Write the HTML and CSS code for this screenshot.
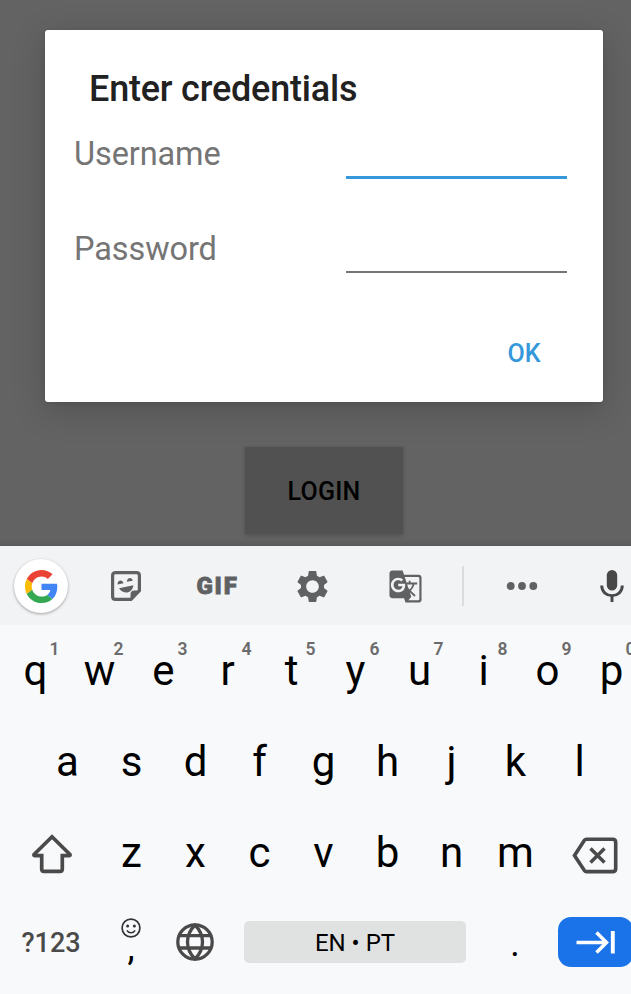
FILE: index.html
```html
<!DOCTYPE html>
<html lang="en">
<head>
<meta charset="utf-8">
<title>Enter credentials</title>
<link rel="stylesheet" href="styles.css">
</head>
<body>
<main class="screen">
  <section class="dialog">
    <h1 class="title">Enter credentials</h1>
    <div class="field"><label>Username</label><div class="input focused"></div></div>
    <div class="field second"><label>Password</label><div class="input"></div></div>
    <button class="ok">OK</button>
  </section>
  <button class="login">LOGIN</button>
</main>
<section class="keyboard">
  <div class="toolbar">
    <div class="google">
      <svg width="33" height="33" viewBox="0 0 48 48"><path fill="#EA4335" d="M24 9.5c3.54 0 6.71 1.22 9.21 3.6l6.85-6.85C35.9 2.38 30.47 0 24 0 14.62 0 6.51 5.38 2.56 13.22l7.98 6.19C12.43 13.72 17.74 9.5 24 9.5z"/><path fill="#4285F4" d="M46.98 24.55c0-1.57-.15-3.09-.38-4.55H24v9.02h12.94c-.58 2.96-2.26 5.48-4.78 7.18l7.73 6c4.51-4.18 7.09-10.36 7.09-17.65z"/><path fill="#FBBC05" d="M10.53 28.59c-.48-1.45-.76-2.99-.76-4.59s.27-3.14.76-4.59l-7.98-6.19C.92 16.46 0 20.12 0 24c0 3.88.92 7.54 2.56 10.78l7.97-6.19z"/><path fill="#34A853" d="M24 48c6.48 0 11.93-2.13 15.89-5.81l-7.73-6c-2.15 1.45-4.92 2.3-8.16 2.3-6.26 0-11.57-4.22-13.47-9.91l-7.98 6.19C6.51 42.62 14.62 48 24 48z"/></svg>
    </div>
    <svg width="32" height="32" viewBox="0 0 32 32"><path d="M5 2.600H26.500Q29.400 2.600 29.400 5.500V20.500L21 29.400H5.500Q2.600 29.400 2.600 26.500V5.500Q2.600 2.600 5.500 2.600Z" fill="none" stroke="#5f6163" stroke-width="3.200"/><path d="M29.500 20.500H24.500Q20.500 20.500 20.500 24.500V29.500Z" fill="#5f6163"/><path d="M7.500 14.500C7.200 9.600 12.800 9 13.500 13.300ZM16.800 11.800C17 7 22.300 6.700 22.700 10.800ZM9 18.200L23.400 15.200C22.200 23.800 13.500 24.800 9 18.200Z" fill="#5f6163"/></svg>
    <span class="gif">GIF</span>
    <svg width="37" height="37" viewBox="0 0 24 24" fill="#5f6163"><path d="M19.430 12.980c.040-.320.070-.640.070-.980s-.030-.660-.070-.980l2.110-1.650c.190-.150.240-.420.120-.640l-2-3.460c-.120-.220-.390-.300-.610-.220l-2.490 1c-.520-.400-1.080-.730-1.690-.980l-.380-2.650C14.460 2.180 14.250 2 14 2h-4c-.250 0-.460.180-.490.420l-.380 2.650c-.610.250-1.170.590-1.690.980l-2.490-1c-.230-.090-.490 0-.610.220l-2 3.460c-.130.220-.070.490.120.640l2.110 1.650c-.040.320-.070.650-.070.980s.030.660.070.980l-2.110 1.650c-.190.150-.240.420-.120.640l2 3.460c.120.220.390.300.610.220l2.490-1c.520.400 1.080.730 1.690.980l.380 2.650c.030.240.240.420.490.420h4c.250 0 .460-.180.490-.420l.380-2.650c.610-.250 1.170-.590 1.690-.980l2.490 1c.230.090.490 0 .610-.220l2-3.460c.120-.220.070-.490-.120-.640l-2.110-1.650zM12 16.100c-2.260 0-4.100-1.840-4.100-4.100s1.840-4.100 4.100-4.100 4.100 1.840 4.100 4.100-1.840 4.100-4.100 4.100z"/></svg>
    <svg width="35" height="35" viewBox="0 0 24 24" fill="#5f6163"><path d="M21 4H11l-1-3H3c-1.100 0-2 .900-2 2v15c0 1.100.900 2 2 2h8l1 3h9c1.100 0 2-.900 2-2V6c0-1.100-.900-2-2-2zM7 16c-2.760 0-5-2.240-5-5s2.240-5 5-5c1.350 0 2.480.500 3.350 1.300L9.030 8.570c-.380-.360-1.040-.780-2.030-.780-1.740 0-3.150 1.440-3.150 3.210S5.260 14.210 7 14.210c2.010 0 2.840-1.440 2.920-2.410H7v-1.710h4.680c.070.310.120.610.120 1.020C11.800 13.970 9.890 16 7 16zm6.170-5.420h3.700c-.430 1.250-1.110 2.430-2.050 3.470-.310-.350-.600-.720-.860-1.100l-.790-2.370zm8.330 9.920c0 .550-.450 1-1 1H14l2-2.500-1.040-3.100 3.100 3.100.920-.920-3.300-3.250.020-.020c1.130-1.250 1.930-2.690 2.400-4.220H20v-1.300h-4.530V8h-1.290v1.290h-1.440L11.460 5.500h9.040c.550 0 1 .450 1 1v14z"/></svg>
    <div class="divider"></div>
    <svg width="32" height="10" viewBox="0 0 32 10" fill="#5f6163"><circle cx="4.700" cy="5" r="3.900"/><circle cx="16" cy="5" r="3.900"/><circle cx="27.300" cy="5" r="3.900"/></svg>
    <svg width="24" height="34" viewBox="0 0 24 34"><rect x="6.800" y="1" width="10.400" height="20.500" rx="5.200" fill="#484848"/><path d="M1.700 16.500C1.700 30 22.300 30 22.300 16.500M12 27V33" fill="none" stroke="#484848" stroke-width="2.900"/></svg>
  </div>
  <div class="row">
    <div class="key">q<sup>1</sup></div><div class="key">w<sup>2</sup></div><div class="key">e<sup>3</sup></div><div class="key">r<sup>4</sup></div><div class="key">t<sup>5</sup></div><div class="key">y<sup>6</sup></div><div class="key">u<sup>7</sup></div><div class="key">i<sup>8</sup></div><div class="key">o<sup>9</sup></div><div class="key">p<sup>0</sup></div>
  </div>
  <div class="row second-row">
    <div class="key">a</div><div class="key">s</div><div class="key">d</div><div class="key">f</div><div class="key">g</div><div class="key">h</div><div class="key">j</div><div class="key">k</div><div class="key">l</div>
  </div>
  <div class="row">
    <div class="key wide shift"><svg width="42" height="40" viewBox="0 0 42 40"><path d="M21 2.800L39 20.500Q39.500 21.700 38 21.700H31.300V35Q31.300 37.400 29 37.400H13Q10.700 37.400 10.700 35V21.700H4Q2.500 21.700 3 20.500Z" fill="none" stroke="#4a4a4a" stroke-width="3.700"/></svg></div>
    <div class="key">z</div><div class="key">x</div><div class="key">c</div><div class="key">v</div><div class="key">b</div><div class="key">n</div><div class="key">m</div>
    <div class="key delete"><svg width="46" height="37" viewBox="0 0 46 37"><path d="M14.500 2.200H40.500Q43.700 2.200 43.700 5.400V31.400Q43.700 34.600 40.500 34.600H14.500Q13.200 34.600 12.400 33.500L2.500 18.400L12.400 3.300Q13.200 2.200 14.500 2.200Z" fill="none" stroke="#4a4a4a" stroke-width="3.600"/><path d="M18.500 11.500L32.500 25.500M32.500 11.500L18.500 25.500" stroke="#4a4a4a" stroke-width="3.500"/></svg></div>
  </div>
  <div class="row bottom">
    <div class="key wide symbols">?123</div>
    <div class="key comma"><svg width="20" height="20" viewBox="0 0 20 20"><circle cx="10" cy="10" r="8.900" fill="none" stroke="#333" stroke-width="1.700"/><circle cx="6.600" cy="8" r="1.500" fill="#333"/><circle cx="13.400" cy="8" r="1.500" fill="#333"/><path d="M5.900 12.300C7.600 15.500 12.400 15.500 14.100 12.300" fill="none" stroke="#333" stroke-width="1.500"/></svg><span>,</span></div>
    <div class="key"><svg width="38" height="38" viewBox="0 0 38 38" fill="none" stroke="#4a4a4a" stroke-width="3.300"><circle cx="19" cy="19" r="17.200"/><path d="M19 2C9 12 9 26 19 36C29 26 29 12 19 2ZM3.500 12.700H34.500M3.500 25H34.500"/></svg></div>
    <div class="space">EN • PT</div>
    <div class="key period">.</div>
    <div class="enter"><svg width="39" height="24" viewBox="0 0 39 24" fill="none" stroke="#fff"><path d="M0.500 12.500H31M20.500 2.500L30.500 12.500L20.500 22.500" stroke-width="3.500"/><path d="M36.800 1V23.500" stroke-width="3.900"/></svg></div>
  </div>
</section>
</body>
</html>
```
FILE: styles.css
```css
* { box-sizing: border-box; }
body {
  margin: 0;
  width: 631px;
  height: 994px;
  overflow: hidden;
  font-family: Roboto, sans-serif;
  background: #f8f9fb;
}
svg { display: block; flex: none; }
button { font-family: inherit; border: 0; padding: 0; }
.screen {
  height: 546px;
  padding: 30px 28px 0 45px;
  background: linear-gradient(#636363 538px, #5b5b5b);
  overflow: hidden;
}
.dialog {
  display: flex;
  flex-direction: column;
  height: 372px;
  padding: 37px 36px 0 29px;
  background: #fff;
  border-radius: 3px;
  box-shadow: 0 8px 34px rgba(0, 0, 0, .18), 0 1px 4px rgba(0, 0, 0, .1);
}
.title {
  margin: 0 0 0 15px;
  font-size: 36px;
  line-height: 44px;
  font-weight: 500;
  letter-spacing: -.2px;
  color: #212121;
}
.field {
  display: flex;
  justify-content: space-between;
  height: 68px;
  padding-top: 24px;
  font-size: 32.500px;
  line-height: 38px;
  letter-spacing: -.1px;
  color: #757575;
}
.second { height: 94px; padding-top: 51px; }
.input {
  width: 221.500px;
  border-bottom: 2px solid #757575;
}
.input.focused { border-bottom: 3px solid #3498db; }
.ok {
  align-self: flex-end;
  width: 86px;
  height: 60px;
  margin-top: 50px;
  background: none;
  color: #3498db;
  font-size: 25px;
  font-weight: 500;
}
.login {
  display: block;
  width: 158px;
  height: 87px;
  margin: 45px 0 0 200px;
  padding-top: 2px;
  background: #515151;
  color: #000;
  font-size: 25px;
  font-weight: 500;
  letter-spacing: .2px;
  box-shadow: 0 1px 4px rgba(0, 0, 0, .22);
}
.keyboard { height: 448px; overflow: hidden; background: #f8f9fb; }
.toolbar {
  display: grid;
  grid-template-columns: 82px 87px 97px 93px 93px 21px 97px 84px;
  place-items: center;
  height: 79px;
  padding-top: 1px;
  background: #f1f3f5;
}
.google {
  display: grid;
  place-items: center;
  width: 54px;
  height: 54px;
  border-radius: 50%;
  background: #fff;
  box-shadow: 0 1px 3px rgba(0, 0, 0, .35);
}
.gif {
  font-size: 24px;
  font-weight: 900;
  letter-spacing: 1.800px;
  color: #5f6163;
  -webkit-text-stroke: .8px #5f6163;
}
.divider { width: 2px; height: 40px; background: #dadce0; }
.row { display: flex; align-items: center; width: 700px; height: 91px; padding-left: 3.500px; }
.second-row { padding-left: 35.500px; }
.key {
  position: relative;
  display: flex;
  justify-content: center;
  align-items: center;
  flex: none;
  width: 64px;
  height: 91px;
  font-size: 42px;
  color: #000;
}
.key sup {
  position: absolute;
  left: 46px;
  top: 13px;
  font-size: 17.500px;
  line-height: 22px;
  font-weight: 600;
  color: #6b6b6b;
}
.wide { width: 96px; }
.shift { padding-top: 2px; }
.delete { width: 95px; padding-top: 6px; }
.bottom { height: 88px; padding-left: 3px; }
.symbols { padding-top: 2px; font-size: 27px; font-weight: 500; color: #4a4a4a; }
.comma { flex-direction: column; justify-content: flex-start; padding-top: 21px; }
.comma span { font-size: 36px; line-height: 36px; margin-top: -8px; }
.space {
  width: 222px;
  height: 42px;
  margin: 0 17px;
  border-radius: 5px;
  background: #e0e2e1;
  font-size: 24px;
  line-height: 44px;
  text-align: center;
}
.period { padding-top: 4px; font-size: 36px; }
.enter {
  display: grid;
  place-items: center;
  width: 75px;
  height: 50px;
  margin-left: 11px;
  border-radius: 13px;
  background: #1a73e8;
}
```
